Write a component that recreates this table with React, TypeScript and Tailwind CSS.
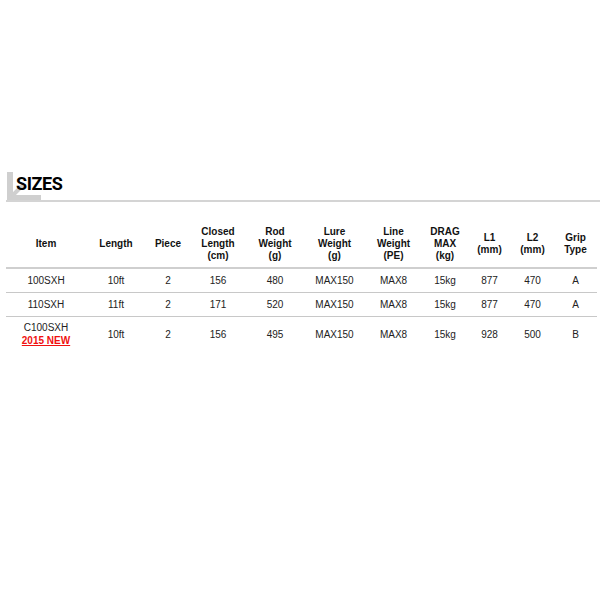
const columns = [
  { label: ["Item"], w: "w-[80px]" },
  { label: ["Length"], w: "w-[60px]" },
  { label: ["Piece"], w: "w-[44px]" },
  { label: ["Closed", "Length", "(cm)"], w: "w-[56px]" },
  { label: ["Rod", "Weight", "(g)"], w: "w-[58px]" },
  { label: ["Lure", "Weight", "(g)"], w: "w-[61px]" },
  { label: ["Line", "Weight", "(PE)"], w: "w-[57px]" },
  { label: ["DRAG", "MAX", "(kg)"], w: "w-[46px]" },
  { label: ["L1", "(mm)"], w: "w-[43px]" },
  { label: ["L2", "(mm)"], w: "w-[43px]" },
  { label: ["Grip", "Type"], w: "w-[43px]" },
];

const rows = [
  { item: "100SXH", isNew: false, cells: ["10ft", "2", "156", "480", "MAX150", "MAX8", "15kg", "877", "470", "A"] },
  { item: "110SXH", isNew: false, cells: ["11ft", "2", "171", "520", "MAX150", "MAX8", "15kg", "877", "470", "A"] },
  { item: "C100SXH", isNew: true, cells: ["10ft", "2", "156", "495", "MAX150", "MAX8", "15kg", "928", "500", "B"] },
];

export default function App() {
  return (
    <div className="w-[600px] h-[600px] bg-white pt-[172px] font-['Liberation_Sans',Arial,sans-serif]">
      {/* section heading */}
      <div className="relative ml-[6px] h-[30px] border-b-2 border-[#d4d4d4]">
        <svg className="absolute left-[1px] top-0" width="34" height="28" viewBox="0 0 34 28">
          <rect x="0" y="0" width="6" height="28" fill="#cfcfcf" />
          <rect x="0" y="23" width="34" height="5" fill="#cfcfcf" />
          <path d="M5 24 L16 13" stroke="#cfcfcf" strokeWidth="4" />
        </svg>
        <h2 className="relative pl-[10px] text-[18px] leading-[24px] font-bold tracking-[-0.4px] text-black font-['Roboto',sans-serif]">
          SIZES
        </h2>
      </div>

      <table className="ml-[6px] mt-[18px] border-collapse table-fixed text-[10px] text-[#222]">
        <thead>
          <tr className="border-b-2 border-[#cfcfcf]">
            {columns.map((c, i) => (
              <th key={i} className={`${c.w} h-[48px] p-0 align-middle text-center font-bold leading-[12px] text-[#111]`}>
                {c.label.map((l, j) => (
                  <div key={j}>{l}</div>
                ))}
              </th>
            ))}
          </tr>
        </thead>
        <tbody>
          {rows.map((r, i) => (
            <tr key={i} className={i < rows.length - 1 ? "border-b border-[#c8c8c8]" : ""}>
              <td className={`p-0 text-center leading-[13px] ${r.isNew ? "h-[36px]" : "h-[24px]"}`}>
                <div>{r.item}</div>
                {r.isNew && <div className="font-bold text-[#f01010] underline">2015 NEW</div>}
              </td>
              {r.cells.map((c, j) => (
                <td key={j} className="p-0 text-center">
                  {c}
                </td>
              ))}
            </tr>
          ))}
        </tbody>
      </table>
    </div>
  );
}
